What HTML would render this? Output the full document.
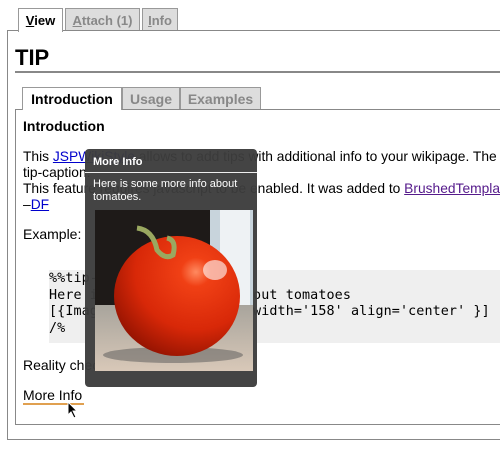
<!DOCTYPE html>
<html><head><meta charset="utf-8"><style>
*{margin:0;padding:0;box-sizing:border-box}
body{width:500px;height:457px;background:#fff;font-family:"Liberation Sans",Arial,sans-serif;font-size:14px;color:#000;position:relative;overflow:hidden}
.a{position:absolute;white-space:nowrap}
.tab{position:absolute;border:1px solid #999;border-bottom:none;background:#ddd;color:#888;font-weight:bold;font-size:13px;padding-top:4px;text-align:center}
.tab.on{background:#fff;color:#000;height:24px}
a{color:#00c;text-decoration:underline}
.mono{font-family:"DejaVu Sans Mono","Liberation Mono",monospace;font-size:13.4px;letter-spacing:0.1px}
</style></head><body>
<div class="a" style="left:7px;top:30px;width:520px;height:410px;border:1px solid #888"></div>
<div class="tab on" style="left:18px;top:8px;width:45px"><u>V</u>iew</div>
<div class="tab" style="left:65px;top:8px;width:75px;height:22px"><u>A</u>ttach (1)</div>
<div class="tab" style="left:142px;top:8px;width:36px;height:22px"><u>I</u>nfo</div>
<div class="a" style="left:15px;top:45px;font-size:22px;font-weight:bold">TIP</div>
<div class="a" style="left:15px;top:71px;width:490px;height:2px;background:#888"></div>
<div class="a" style="left:15px;top:109px;width:500px;height:316px;border:1px solid #888"></div>
<div class="tab on" style="left:22px;top:87px;width:100px;height:23px;font-size:14px;padding-top:3px">Introduction</div>
<div class="tab" style="left:122px;top:87px;width:58px;height:22px;font-size:14px;padding-top:3px">Usage</div>
<div class="tab" style="left:180px;top:87px;width:81px;height:22px;font-size:14px;padding-top:3px">Examples</div>
<div class="a" style="left:23px;top:118px;font-weight:bold;font-size:14px">Introduction</div>
<div class="a" style="left:23px;top:149px;line-height:16px;font-size:13.8px">This <a href="#">JSPWikiStyle</a> allows to add tips with additional info to your wikipage. The<br>tip-caption.<br>This feature requires javascript to be enabled. It was added to <a href="#" style="color:#551a8b">BrushedTemplate</a><br>–<a href="#">DF</a></div>
<div class="a" style="left:23px;top:226px">Example:</div>
<div class="a" style="left:49px;top:270px;width:460px;height:73px;background:#efefef"></div>
<div class="a mono" style="left:49px;top:271px;line-height:16.5px">%%tip-More Info<br>Here is some more info about tomatoes<br>[{Image src='tomato.jpg' width='158' align='center' }]<br>/%</div>
<div class="a" style="left:23px;top:357px">Reality check</div>
<div class="a" style="left:23px;top:387px">More Info</div>
<div class="a" style="left:23px;top:403px;width:61px;height:2px;background:#e0a050"></div>
<div class="a" style="left:85px;top:149px;width:172px;height:238px;background:rgba(60,60,60,0.96);border-radius:4px"></div>
<div class="a" style="left:93px;top:156px;color:#fff;font-weight:bold;font-size:11px">More Info</div>
<div class="a" style="left:85px;top:172px;width:172px;height:1px;background:#eee"></div>
<div class="a" style="left:93px;top:178px;color:#fff;font-size:11px;line-height:12.5px">Here is some more info about<br>tomatoes.</div>
<svg class="a" style="left:95px;top:210px" width="158" height="161" viewBox="0 0 158 161">
<defs>
<radialGradient id="t" cx="0.65" cy="0.3" r="0.8"><stop offset="0" stop-color="#ff8a60"/><stop offset="0.15" stop-color="#f04015"/><stop offset="0.6" stop-color="#d82808"/><stop offset="1" stop-color="#8a1000"/></radialGradient>
<linearGradient id="tb" x1="0" y1="0" x2="0" y2="1"><stop offset="0" stop-color="#a8a49c"/><stop offset="1" stop-color="#d8c8b8"/></linearGradient>
</defs>
<rect width="158" height="161" fill="#1e1a18"/>
<rect x="115" y="0" width="43" height="100" fill="#c8d4dc"/>
<rect x="125" y="0" width="30" height="95" fill="#eef2f4"/>
<rect x="0" y="95" width="158" height="66" fill="url(#tb)"/>
<ellipse cx="78" cy="145" rx="70" ry="8" fill="#555" opacity="0.5"/>
<ellipse cx="82" cy="86" rx="63" ry="60" fill="url(#t)"/>
<ellipse cx="120" cy="60" rx="12" ry="10" fill="#fff" opacity="0.6"/>
<path d="M42 18 Q58 20 62 40 Q70 50 78 45 Q82 30 72 28" stroke="#9aa860" stroke-width="5" fill="none"/>
</svg>
<svg class="a" style="left:67px;top:401px" width="12" height="18" viewBox="0 0 12 18"><path d="M1 1 L1 14 L4 11 L7 17 L9 16 L6 10 L10 10 Z" fill="#000" stroke="#fff" stroke-width="1"/></svg>
</body></html>
